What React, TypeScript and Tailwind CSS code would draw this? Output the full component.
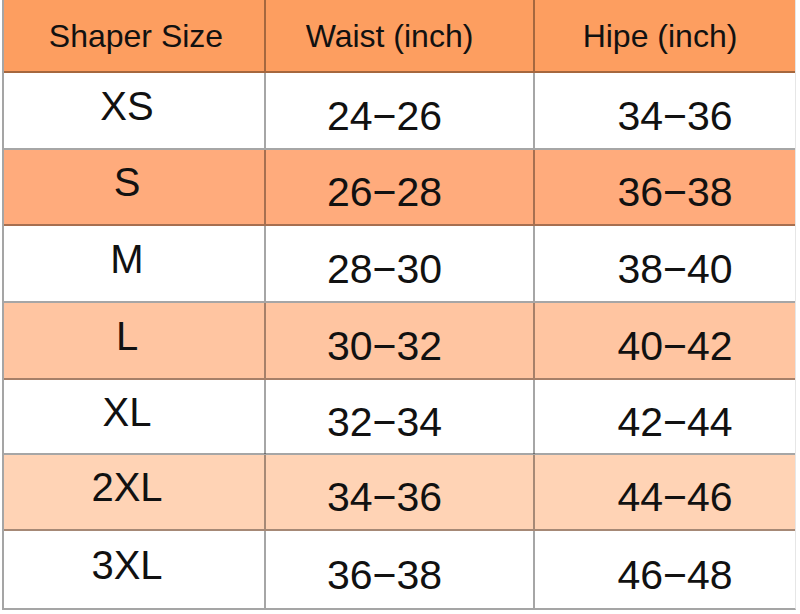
import { clsx } from 'clsx'

type Row = {
  size: string
  waist: string
  hip: string
  bg: string
  h: string
}

const ROWS: Row[] = [
  { size: 'XS', waist: '24−26', hip: '34−36', bg: 'bg-white', h: 'h-[77px]' },
  { size: 'S', waist: '26−28', hip: '36−38', bg: 'bg-[#ffab7c]', h: 'h-[76px]' },
  { size: 'M', waist: '28−30', hip: '38−40', bg: 'bg-white', h: 'h-[77px]' },
  { size: 'L', waist: '30−32', hip: '40−42', bg: 'bg-[#ffc5a1]', h: 'h-[77px]' },
  { size: 'XL', waist: '32−34', hip: '42−44', bg: 'bg-white', h: 'h-[75px]' },
  { size: '2XL', waist: '34−36', hip: '44−46', bg: 'bg-[#ffd3b5]', h: 'h-[76px]' },
  { size: '3XL', waist: '36−38', hip: '46−48', bg: 'bg-white', h: 'h-[77px]' },
]

const HEADERS = ['Shaper Size', 'Waist (inch)', 'Hipe (inch)']

export default function App() {
  return (
    <div className="w-[800px] h-[614px] bg-white font-['Liberation_Sans',Arial,sans-serif] text-[#111]">
      <div className="ml-[2px] w-[794px] border-l-2 border-b-2 border-black/35 border-r border-r-black/10">
        <div className="grid grid-cols-[262px_269px_1fr] h-[73px] bg-[#fd9e60] border-b-2 border-black/35">
          {HEADERS.map((t, i) => (
            <div
              key={t}
              className={clsx(
                'flex items-center justify-center text-[32px]',
                i < 2 && 'border-r-2 border-black/35',
                i === 0 && 'pl-[4px]',
                i === 1 && 'pr-[20px]',
                i === 2 && 'pr-[10px]',
              )}
            >
              {t}
            </div>
          ))}
        </div>

        {ROWS.map((r, idx) => (
          <div
            key={r.size}
            className={clsx(
              'grid grid-cols-[262px_269px_1fr]',
              r.bg,
              r.h,
              idx < ROWS.length - 1 && 'border-b-2 border-black/35',
            )}
          >
            <div className="flex items-center justify-center border-r-2 border-black/35 pr-[14px] pb-[10px] text-[40px]">
              {r.size}
            </div>
            <div className="flex items-center justify-center border-r-2 border-black/35 pr-[30px] pt-[12px] text-[41px]">
              {r.waist}
            </div>
            <div className="flex items-center justify-center pl-[20px] pt-[12px] text-[41px]">
              {r.hip}
            </div>
          </div>
        ))}
      </div>
    </div>
  )
}
